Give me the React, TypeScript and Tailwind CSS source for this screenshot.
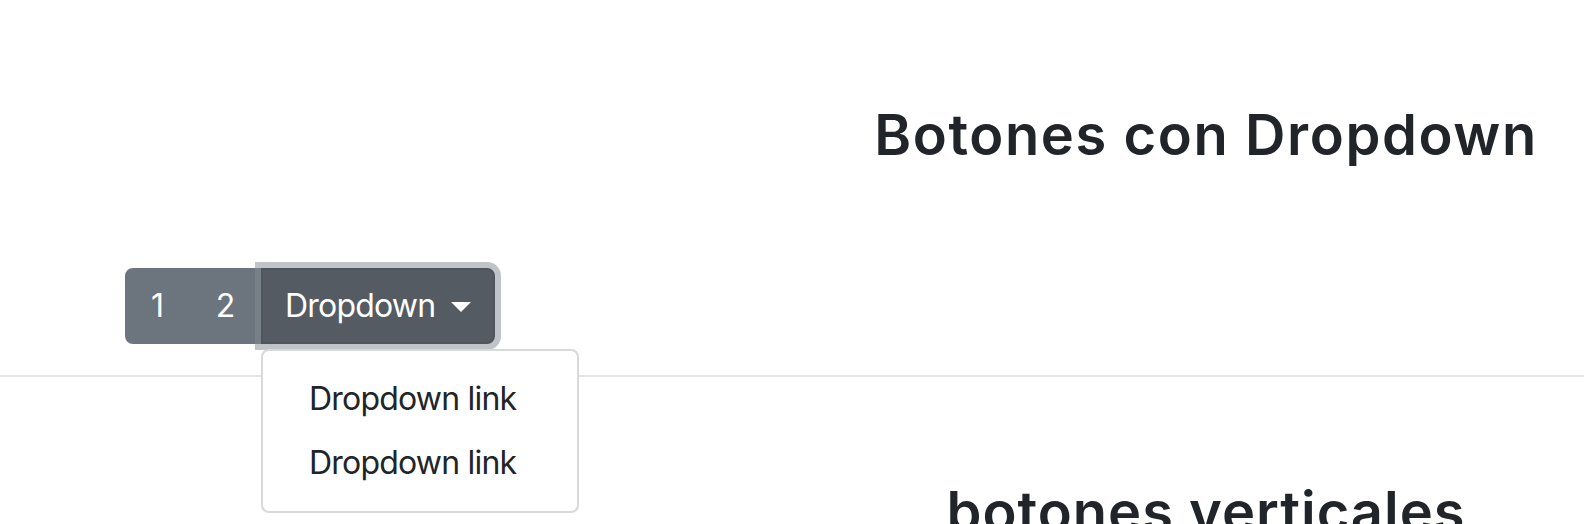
import React from 'react';

// Bootstrap-like "button group with dropdown" demo, rendered at 2x scale
const font = { fontFamily: 'Inter, "Noto Sans", sans-serif' };

const App = () => {
  return (
    <div className="w-full min-h-[524px] bg-white text-[#212529] overflow-hidden" style={font}>
      <section className="pt-[102px]">
        <div className="flex justify-end">
          <h3 className="w-[756px] text-center text-[56px] leading-[1.2] font-semibold tracking-[1.6px]">Botones con Dropdown</h3>
        </div>

        <div className="mt-[99px] ml-[125px] flex items-stretch">
          <button className="w-[65px] h-[76px] text-[32px] leading-[48px] text-white bg-[#6c757d] border-2 border-[#6c757d] rounded-l-[8px]">
            1
          </button>
          <button className="w-[75px] h-[76px] -ml-[2px] text-[32px] leading-[48px] text-white bg-[#6c757d] border-2 border-[#6c757d]">
            2
          </button>
          <div className="relative -ml-[2px] z-10">
            <button className="w-[234px] h-[76px] pl-[22px] flex items-center gap-[16px] text-[32px] leading-[48px] tracking-[-0.8px] text-white bg-[#545b62] border-2 border-[#4e555b] rounded-r-[8px] shadow-[0_0_0_6px_rgba(130,138,145,0.5)]">
              <span>Dropdown</span>
              <span className="mt-[2px] w-0 h-0 border-t-[10px] border-t-white border-x-[10px] border-x-transparent" />
            </button>
            <div className="absolute left-0 top-full mt-[5px] w-[318px] py-[16px] bg-white border-2 border-[rgba(0,0,0,0.15)] rounded-[8px] z-20">
              <a className="block pl-[46px] pr-[48px] py-[8px] text-[32px] leading-[48px] tracking-[-0.8px] text-[#212529]" href="#">Dropdown link</a>
              <a className="block pl-[46px] pr-[48px] py-[8px] text-[32px] leading-[48px] tracking-[-0.8px] text-[#212529]" href="#">Dropdown link</a>
            </div>
          </div>
        </div>

        <hr className="mt-[31px] border-0 border-t-2 border-[#e5e5e5]" />
      </section>

      <section className="pt-[102px]">
        <div className="flex justify-end">
          <h3 className="w-[756px] text-center text-[56px] leading-[1.2] font-semibold tracking-[1px]">botones verticales</h3>
        </div>
      </section>
    </div>
  );
};

export default App;
